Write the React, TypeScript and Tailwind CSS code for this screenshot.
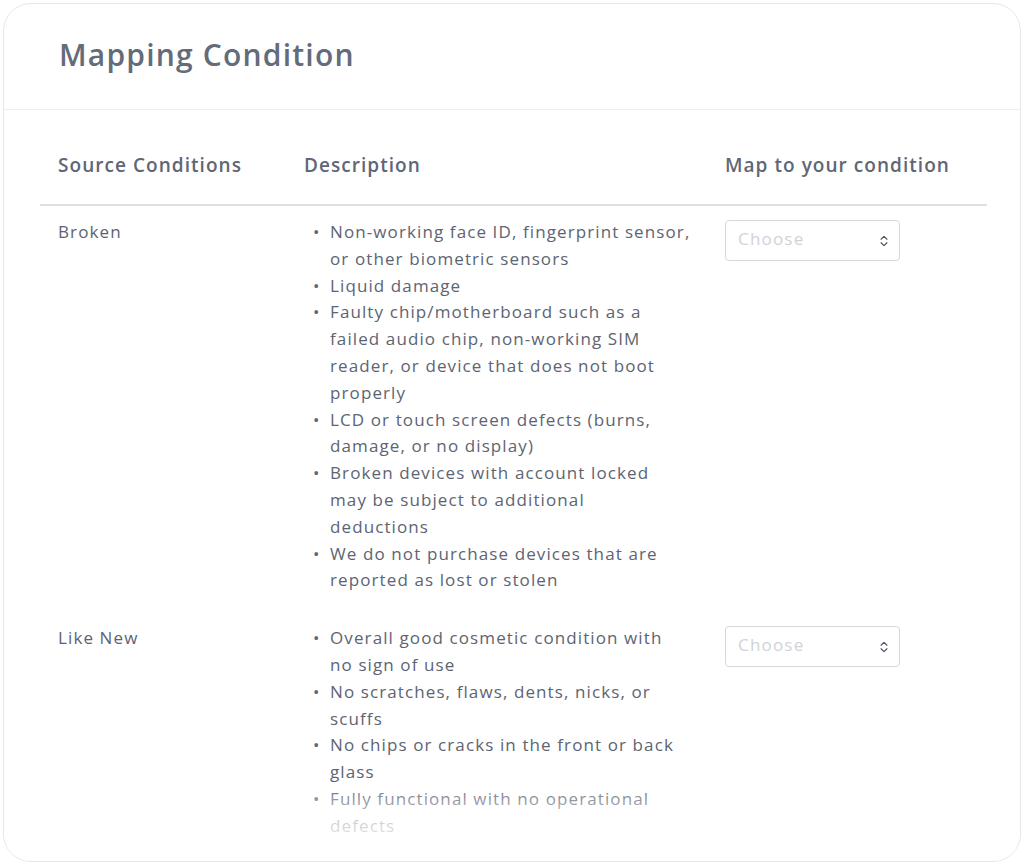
import { ChevronsUpDown } from "lucide-react";

// each item is split into the lines it wraps to in the design
const rows = [
  {
    name: "Broken",
    items: [
      ["Non-working face ID, fingerprint sensor,", "or other biometric sensors"],
      ["Liquid damage"],
      [
        "Faulty chip/motherboard such as a",
        "failed audio chip, non-working SIM",
        "reader, or device that does not boot",
        "properly",
      ],
      ["LCD or touch screen defects (burns,", "damage, or no display)"],
      ["Broken devices with account locked", "may be subject to additional", "deductions"],
      ["We do not purchase devices that are", "reported as lost or stolen"],
    ],
  },
  {
    name: "Like New",
    items: [
      ["Overall good cosmetic condition with", "no sign of use"],
      ["No scratches, flaws, dents, nicks, or", "scuffs"],
      ["No chips or cracks in the front or back", "glass"],
      ["Fully functional with no operational", "defects"],
    ],
  },
];

function Select() {
  return (
    <div className="flex h-[41px] w-[175px] items-center justify-between rounded-[4px] border border-[#d4d7dc] bg-white pb-[2px] pl-[12px] pr-[8px]">
      <span className="text-[17px] tracking-[0.07em] text-[#cfd3d9]">Choose</span>
      <ChevronsUpDown size={14} strokeWidth={2} className="mt-[2px] text-[#4b5260]" />
    </div>
  );
}

export default function App() {
  return (
    <div className="min-h-screen bg-white p-[3px] font-['Open_Sans',sans-serif]">
      <div className="relative flex h-[859px] flex-col overflow-hidden rounded-[28px] border border-[#e6e7ea] bg-white">
        <div className="flex h-[106px] shrink-0 items-center border-b border-[#eceef1] px-[55px] pb-[4px]">
          <h1 className="text-[30px] font-semibold tracking-[0.04em] text-[#646b79]">Mapping Condition</h1>
        </div>

        <div className="pl-[36px] pr-[33px]">
          <div className="grid grid-cols-[264px_421px_1fr] border-b-2 border-[#dcdfe3] pt-[41px] pb-[25px] text-[19px] font-semibold leading-[28px] tracking-[0.055em] text-[#5f6675]">
            <div className="pl-[18px]">Source Conditions</div>
            <div>Description</div>
            <div>Map to your condition</div>
          </div>

          {rows.map((row) => (
            <div
              key={row.name}
              className="grid grid-cols-[264px_421px_1fr] pt-[13px] pb-[18px] text-[17px] leading-[26.8px] tracking-[0.065em] text-[#5d6472]"
            >
              <div className="pl-[18px]">{row.name}</div>
              <ul>
                {row.items.map((lines) => (
                  <li key={lines[0]} className="flex">
                    <span className="w-[26px] shrink-0 pl-[9px]">•</span>
                    <span className="whitespace-nowrap">
                      {lines.map((line, i) => (
                        <span key={i} className="block">
                          {line}
                        </span>
                      ))}
                    </span>
                  </li>
                ))}
              </ul>
              <div className="pt-[1px]">
                <Select />
              </div>
            </div>
          ))}
        </div>

        <div className="pointer-events-none absolute inset-x-0 bottom-0 h-[80px] bg-gradient-to-b from-white/0 via-white/70 to-white" />
      </div>
    </div>
  );
}
